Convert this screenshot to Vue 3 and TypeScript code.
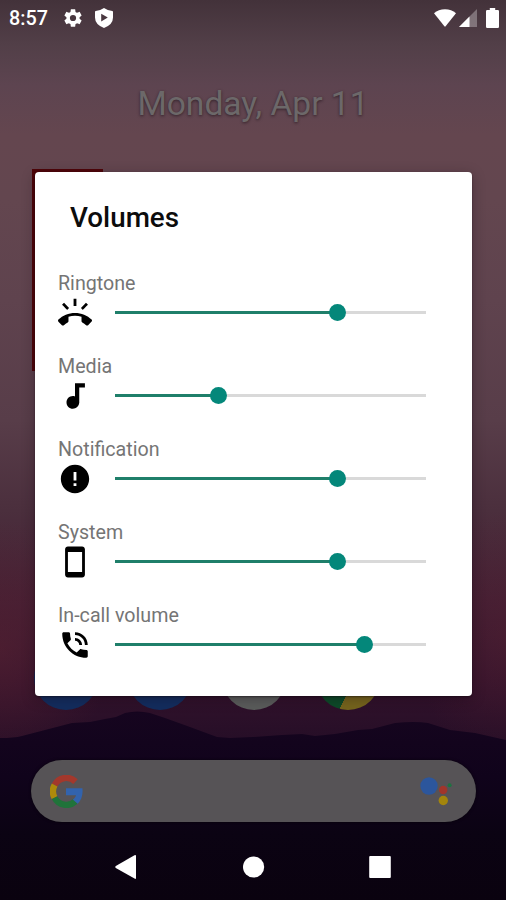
<script setup lang="ts">
interface Channel {
  label: string
  level: number
  icon: string
}

const channels: Channel[] = [
  {
    label: 'Ringtone',
    level: 71.5,
    icon: 'M23.71 16.67C20.66 13.78 16.54 12 12 12 7.46 12 3.34 13.78.29 16.67c-.18.18-.29.43-.29.71 0 .28.11.53.29.71l2.48 2.48c.18.18.43.29.71.29.27 0 .52-.11.7-.28.79-.74 1.69-1.36 2.66-1.85.33-.16.56-.5.56-.9v-3.1c1.45-.48 3-.73 4.6-.73s3.15.25 4.6.72v3.1c0 .39.23.74.56.9.98.49 1.87 1.12 2.67 1.85.18.18.43.28.7.28.28 0 .53-.11.71-.29l2.48-2.48c.18-.18.29-.43.29-.71 0-.28-.12-.52-.3-.7zM21.16 6.26l-1.41-1.41-3.56 3.55 1.41 1.41s3.45-3.52 3.56-3.55zM13 2h-2v5h2V2zM6.4 9.81L7.81 8.4 4.26 4.84 2.84 6.26c.11.03 3.56 3.55 3.56 3.55z',
  },
  {
    label: 'Media',
    level: 33.3,
    icon: 'M12 3v9.28c-.47-.17-.97-.28-1.5-.28C8.01 12 6 14.01 6 16.5S8.01 21 10.5 21c2.31 0 4.2-1.75 4.45-4H15V6h4V3h-7z',
  },
  {
    label: 'Notification',
    level: 71.5,
    icon: 'M12 2C6.48 2 2 6.48 2 12s4.48 10 10 10 10-4.48 10-10S17.52 2 12 2zm1 15h-2v-2h2v2zm0-4h-2V7h2v6z',
  },
  {
    label: 'System',
    level: 71.5,
    icon: 'M17 1.01L7 1c-1.1 0-1.99.9-1.99 2v18c0 1.1.89 2 1.99 2h10c1.1 0 2-.9 2-2V3c0-1.1-.9-1.99-2-1.99zM17 19H7V5h10v14z',
  },
  {
    label: 'In-call volume',
    level: 80.1,
    icon: 'M20 15.5c-1.25 0-2.45-.2-3.57-.57-.35-.11-.74-.03-1.02.24l-2.2 2.2c-2.83-1.44-5.15-3.75-6.59-6.59l2.2-2.21c.28-.26.36-.65.25-1C8.7 6.45 8.5 5.25 8.5 4c0-.55-.45-1-1-1H4c-.55 0-1 .45-1 1 0 9.39 7.61 17 17 17 .55 0 1-.45 1-1v-3.5c0-.55-.45-1-1-1zM19 12h2c0-4.97-4.03-9-9-9v2c3.87 0 7 3.13 7 7zm-4 0h2c0-2.76-2.24-5-5-5v2c1.66 0 3 1.34 3 3z',
  },
]
</script>

<template>
  <div class="phone">
    <svg class="wallpaper" viewBox="0 0 506 900" aria-hidden="true">
      <defs>
        <linearGradient id="hills" x1="0" y1="710" x2="0" y2="900" gradientUnits="userSpaceOnUse">
          <stop offset="0" stop-color="#16051f" />
          <stop offset="0.35" stop-color="#10031b" />
          <stop offset="0.65" stop-color="#0b0313" />
          <stop offset="1" stop-color="#0a020f" />
        </linearGradient>
      </defs>
      <path fill="url(#hills)" d="M0 738 Q14 738 22 736 L45 730 L72 723 L90 722 L105 719 L116 717 L125 713 Q137 710 150 713 L165 718 L190 727 L217 737 L230 738 L253 737 L282 735 L302 734 L315 736 L335 734 L358 730 L372 729 L395 723 Q415 721 428 723 L450 730 L475 733 L506 740 V900 H0z" />
    </svg>

    <header class="status">
      <span class="clock">8:57</span>
      <svg class="gear" viewBox="0 0 24 24">
        <path d="M19.14 12.94c.04-.3.06-.61.06-.94 0-.32-.02-.64-.07-.94l2.03-1.58c.18-.14.23-.41.12-.61l-1.92-3.32c-.12-.22-.37-.29-.59-.22l-2.39.96c-.5-.38-1.03-.7-1.62-.94l-.36-2.54c-.04-.24-.24-.41-.48-.41h-3.84c-.24 0-.43.17-.47.41l-.36 2.54c-.59.24-1.13.57-1.62.94l-2.39-.96c-.22-.08-.47 0-.59.22L2.74 8.87c-.12.21-.08.47.12.61l2.03 1.58c-.05.3-.09.63-.09.94s.02.64.07.94l-2.03 1.58c-.18.14-.23.41-.12.61l1.92 3.32c.12.22.37.29.59.22l2.39-.96c.5.38 1.03.7 1.62.94l.36 2.54c.05.24.24.41.48.41h3.84c.24 0 .44-.17.47-.41l.36-2.54c.59-.24 1.13-.56 1.62-.94l2.39.96c.22.08.47 0 .59-.22l1.92-3.32c.12-.22.07-.47-.12-.61l-2.01-1.58zM12 15.4A3.4 3.4 0 1 1 12 8.6a3.4 3.4 0 0 1 0 6.800z" />
      </svg>
      <svg class="shield" viewBox="0 0 18 20">
        <path fill-rule="evenodd" d="M9 0 Q12.5 2.5 17.3 3 Q18 3.2 18 4 V9.5 Q18 16.5 9 20 Q0 16.5 0 9.5 V4 Q0 3.2 .7 3 Q5.5 2.5 9 0z M6.2 5.8 V13.4 L12.8 9.6z" />
      </svg>
      <svg class="wifi" viewBox="0 0 22 18">
        <path d="M0 4.2 Q4.500 .3 11 .3 T22 4.200 L11.600 17.300 Q11 18 10.400 17.300z" />
      </svg>
      <svg class="signal" viewBox="0 0 18 18">
        <path fill-opacity=".3" d="M18 0 V18 H0z" />
        <path d="M10.500 7.500 V18 H0z" />
      </svg>
      <svg class="battery" viewBox="0 0 13 20">
        <path d="M3.800 0 H9.200 V2 H11.800 Q13 2 13 3.200 V18.800 Q13 20 11.800 20 H1.200 Q0 20 0 18.800 V3.200 Q0 2 1.200 2 H3.800z" />
      </svg>
    </header>

    <p class="date">Monday, Apr 11</p>

    <main class="stage">
      <div class="home">
        <div class="widget"></div>
        <div class="dock">
          <span class="app app-blue"></span>
          <span class="app app-blue"></span>
          <span class="app app-grey"></span>
          <span class="app app-chrome"></span>
        </div>
      </div>

      <section class="dialog">
        <h1 class="title">Volumes</h1>
        <ul class="channels">
          <li v-for="c in channels" :key="c.label" class="channel">
            <span class="label">{{ c.label }}</span>
            <div class="control">
              <svg class="icon" viewBox="0 0 24 24"><path :d="c.icon" /></svg>
              <div class="track">
                <div class="fill" :style="{ width: c.level + '%' }"></div>
                <div class="thumb"></div>
              </div>
            </div>
          </li>
        </ul>
      </section>
    </main>

    <div class="search">
      <svg class="google" viewBox="0 0 33 33" fill="none" stroke-width="6.400">
        <path stroke="#a3382c" d="M4.600 10 A13.300 13.300 0 0 1 25.500 6.600" />
        <path stroke="#ad8a0a" d="M4.600 22.800 A13.300 13.300 0 0 1 4.600 10" />
        <path stroke="#20733a" d="M25.400 26.400 A13.300 13.300 0 0 1 4.600 22.600" />
        <path fill="#3263ad" d="M16 13.300 H32.400 C33.200 19.500 31.500 25 27.700 28.700 L22.800 24.600 C24.500 23.400 25.700 21.800 26 20.200 H16z" />
      </svg>
      <svg class="assistant" viewBox="0 0 36 30">
        <circle cx="9" cy="10" r="8.700" fill="#2c569c" />
        <circle cx="23.200" cy="14" r="4.200" fill="#a1352b" />
        <circle cx="23.300" cy="24.500" r="4.700" fill="#a3850c" />
        <circle cx="29.600" cy="9.300" r="2" fill="#1d7340" />
      </svg>
    </div>

    <nav class="nav">
      <svg viewBox="0 0 24 26"><path d="M1.800 12.100 L20.500 1.300 Q22 .6 22 2 V24 Q22 25.400 20.500 24.600 L1.800 13.900 Q.5 13 1.800 12.100z" /></svg>
      <svg viewBox="0 0 24 26"><circle cx="12.600" cy="13" r="10.600" /></svg>
      <svg viewBox="0 0 24 26"><rect x="1.200" y="2" width="21.600" height="22" rx="1" /></svg>
    </nav>
  </div>
</template>

<style>
body {
  margin: 0;
  overflow: hidden;
}
</style>

<style scoped>
.phone {
  position: relative;
  display: flex;
  flex-direction: column;
  width: 506px;
  height: 900px;
  overflow: hidden;
  font-family: Roboto, 'Liberation Sans', sans-serif;
  background:
    radial-gradient(110px 130px at 0 650px, rgba(96, 36, 50, 0.45), transparent),
    radial-gradient(90px 130px at 506px 640px, rgba(96, 36, 50, 0.3), transparent),
    linear-gradient(
      #43323a 0,
      #523f48 45px,
      #5d4450 85px,
      #64464f 135px,
      #63464f 200px,
      #5f434e 300px,
      #583d49 420px,
      #4b2f3d 510px,
      #421e33 600px,
      #34132c 680px,
      #260e27 740px
    );
}

.wallpaper {
  position: absolute;
  inset: 0;
  width: 506px;
  height: 900px;
}

.status,
.date,
.stage,
.search,
.nav {
  position: relative;
}

.status {
  display: flex;
  align-items: center;
  box-sizing: border-box;
  height: 35px;
  padding: 0 7px 0 9px;
  fill: #fff;
}

.clock {
  width: 53px;
  color: #fff;
  font-size: 19.800px;
  font-weight: 500;
  line-height: 35px;
  padding-top: 1px;
}

.gear {
  width: 22px;
  height: 22px;
}

.shield {
  width: 18px;
  height: 20px;
  margin-left: 10.500px;
}

.wifi {
  width: 22px;
  height: 18px;
  margin-left: auto;
}

.signal {
  width: 18px;
  height: 18px;
  margin: 1px 9px 0 3px;
}

.battery {
  width: 13px;
  height: 20px;
}

.date {
  height: 134px;
  margin: 0;
  color: #6c6869;
  font-size: 33.600px;
  line-height: 137px;
  text-align: center;
  text-shadow: 0 1px 3px rgba(20, 10, 16, 0.6);
}

.stage {
  display: grid;
  height: 591px;
}

.home,
.dialog {
  grid-area: 1 / 1;
}

.home {
  display: flex;
  flex-direction: column;
  justify-content: space-between;
  height: 541px;
  padding-left: 32px;
}

.widget {
  width: 71px;
  height: 202px;
  background: #4e0509;
}

.dock {
  display: flex;
  gap: 30px;
  padding-left: 2px;
}

.app {
  width: 64px;
  height: 64px;
  border-radius: 50%;
}

.app-blue {
  background: #132d5e;
}

.app-grey {
  background: #5a5c5b;
}

.app-chrome {
  background: linear-gradient(116deg, #0c4a28 57%, #75641d 57%);
}

.dialog {
  box-sizing: border-box;
  width: 437px;
  height: 524px;
  margin: 2.500px 0 0 35px;
  padding: 28px 46px 0 23px;
  border-radius: 4px;
  background: #fff;
  box-shadow: 0 3px 14px rgba(20, 8, 16, 0.3), 0 1px 2px rgba(10, 0, 8, 0.45);
}

.title {
  margin: 0 0 36px 12px;
  color: #0c0c0c;
  font-size: 27.800px;
  font-weight: 500;
  line-height: 36px;
}

.channels {
  margin: 0;
  padding: 0;
  list-style: none;
}

.channel {
  height: 83px;
}

.label {
  display: block;
  height: 24px;
  color: #757575;
  font-size: 19.650px;
  line-height: 24px;
}

.control {
  display: flex;
  align-items: center;
  gap: 22.500px;
  height: 34px;
}

.icon {
  flex: none;
  width: 34px;
  height: 34px;
  fill: #000;
}

.track {
  display: flex;
  align-items: center;
  flex: 1;
  height: 2.500px;
  background: #d9d9d9;
}

.fill {
  flex: none;
  height: 100%;
  background: #1f7f6a;
}

.thumb {
  flex: none;
  width: 17px;
  height: 17px;
  margin-left: -8.500px;
  border-radius: 50%;
  background: #04877a;
}

.search {
  display: flex;
  align-items: center;
  justify-content: space-between;
  box-sizing: border-box;
  width: 445px;
  height: 62px;
  margin-left: 31px;
  padding: 0 20px 0 18.500px;
  border-radius: 31px;
  background: #565356;
  box-shadow: 0 0 3px rgba(0, 0, 0, 0.6);
}

.google {
  width: 33px;
  height: 33px;
}

.assistant {
  width: 36px;
  height: 30px;
}

.nav {
  display: flex;
  justify-content: center;
  gap: 103px;
  padding-top: 32px;
  fill: #fff;
}

.nav svg {
  width: 24px;
  height: 26px;
}
</style>
